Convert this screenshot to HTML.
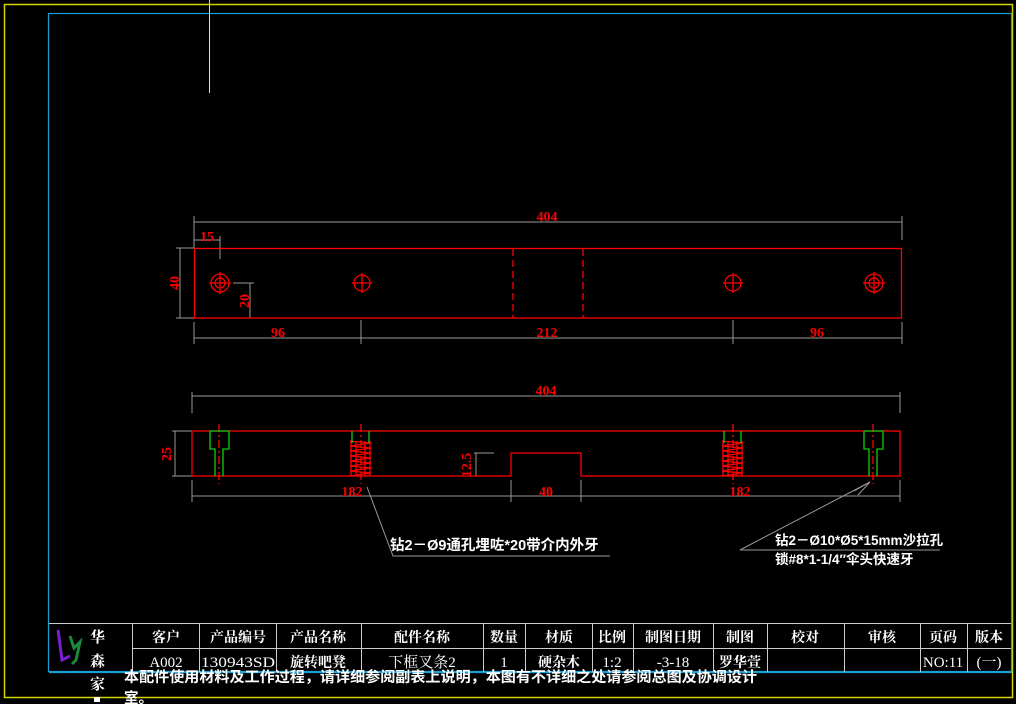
<!DOCTYPE html>
<html><head><meta charset="utf-8"><style>
html,body{margin:0;padding:0;background:#000;width:1016px;height:704px;overflow:hidden}
svg{display:block}
text{font-family:"Liberation Serif","Noto Serif CJK SC",serif}
.w{fill:#fff;font-family:"Liberation Sans","Noto Sans CJK SC",sans-serif;font-size:13px;font-weight:bold}
.r{fill:#f00;font-size:14px;font-weight:bold}
</style></head><body>
<svg width="1016" height="704" viewBox="0 0 1016 704" xmlns="http://www.w3.org/2000/svg">
<rect x="0" y="0" width="1016" height="704" fill="#000"/>
<rect x="4.5" y="4.5" width="1008" height="693" fill="none" stroke="#d4d400" stroke-width="1.5"/>
<rect x="48.5" y="13.5" width="963" height="658" fill="none" stroke="#1aa0d8" stroke-width="1.2"/>
<line x1="209.5" y1="0" x2="209.5" y2="93" stroke="#ddd" stroke-width="1"/>

<g stroke="#999" stroke-width="1" fill="none">
<line x1="194" y1="222" x2="902" y2="222"/>
<line x1="194" y1="216" x2="194" y2="248"/>
<line x1="902" y1="216" x2="902" y2="240"/>
<line x1="194" y1="240" x2="220" y2="240"/>
<line x1="220" y1="236" x2="220" y2="259"/>
<line x1="176" y1="248" x2="194" y2="248"/>
<line x1="176" y1="318" x2="194" y2="318"/>
<line x1="180" y1="248" x2="180" y2="318"/>
<line x1="233" y1="283" x2="254" y2="283"/>
<line x1="250" y1="283" x2="250" y2="318"/>
<line x1="233" y1="318" x2="254" y2="318"/>
<line x1="194" y1="322" x2="194" y2="344"/>
<line x1="361" y1="320" x2="361" y2="344"/>
<line x1="733" y1="320" x2="733" y2="344"/>
<line x1="902" y1="322" x2="902" y2="344"/>
<line x1="194" y1="338" x2="902" y2="338"/>
</g>
<g stroke="#f00" stroke-width="1.3" fill="none">
<rect x="194.5" y="248.5" width="707" height="69.5"/>
<line x1="513" y1="249" x2="513" y2="318" stroke-dasharray="7,4"/>
<line x1="583" y1="249" x2="583" y2="318" stroke-dasharray="7,4"/>
<circle cx="220" cy="283" r="9"/><circle cx="220" cy="283" r="5"/>
<line x1="209" y1="283" x2="231" y2="283"/><line x1="220" y1="272" x2="220" y2="294"/>
<circle cx="362" cy="283" r="8"/><line x1="352" y1="283" x2="372" y2="283"/><line x1="362" y1="273" x2="362" y2="293"/>
<circle cx="733" cy="283" r="8"/><line x1="723" y1="283" x2="743" y2="283"/><line x1="733" y1="273" x2="733" y2="293"/>
<circle cx="874" cy="283" r="9"/><circle cx="874" cy="283" r="5"/>
<line x1="863" y1="283" x2="885" y2="283"/><line x1="874" y1="272" x2="874" y2="294"/>
</g>
<text class="r" x="547" y="221" text-anchor="middle">404</text>
<text class="r" x="207" y="241" text-anchor="middle">15</text>
<text class="r" x="179" y="283" text-anchor="middle" transform="rotate(-90 179 283)">40</text>
<text class="r" x="249" y="301" text-anchor="middle" transform="rotate(-90 249 301)">20</text>
<text class="r" x="278" y="337" text-anchor="middle">96</text>
<text class="r" x="547" y="337" text-anchor="middle">212</text>
<text class="r" x="817" y="337" text-anchor="middle">96</text>

<g stroke="#999" stroke-width="1" fill="none">
<line x1="192" y1="396" x2="900" y2="396"/>
<line x1="192" y1="392" x2="192" y2="413"/>
<line x1="900" y1="392" x2="900" y2="413"/>
<line x1="172" y1="431" x2="192" y2="431"/>
<line x1="172" y1="476" x2="192" y2="476"/>
<line x1="175" y1="431" x2="175" y2="476"/>
<line x1="474" y1="453" x2="494" y2="453"/>
<line x1="476" y1="453" x2="476" y2="476"/>
<line x1="474" y1="476" x2="494" y2="476"/>
<line x1="192" y1="480" x2="192" y2="502"/>
<line x1="900" y1="480" x2="900" y2="502"/>
<line x1="511" y1="480" x2="511" y2="502"/>
<line x1="581" y1="480" x2="581" y2="502"/>
<line x1="192" y1="496" x2="900" y2="496"/>
<polyline points="367,487 393,556 610,556"/>
<polyline points="870,482 740,550 940,550"/>
<polyline points="854,491 870,482 858,495"/>
</g>
<g stroke="#f00" stroke-width="1.3" fill="none">
<polyline points="192,431 900,431 900,476 581,476 581,453 511,453 511,476 192,476 192,431"/>
<line x1="219" y1="424" x2="219" y2="484" stroke-dasharray="8,3,2,3"/>
<line x1="361" y1="424" x2="361" y2="484" stroke-dasharray="8,3,2,3"/>
<line x1="733" y1="424" x2="733" y2="484" stroke-dasharray="8,3,2,3"/>
<line x1="873" y1="424" x2="873" y2="484" stroke-dasharray="8,3,2,3"/>
<path d="M350 441 L371 443 L350 446 L371 448 L350 451 L371 453 L350 456 L371 458 L350 461 L371 463 L350 466 L371 468 L350 471 L371 473 L350 476 M351 441 V476 M370 441 V476 M356 441 V476 M365 441 V476"/>
<path d="M722 441 L743 443 L722 446 L743 448 L722 451 L743 453 L722 456 L743 458 L722 461 L743 463 L722 466 L743 468 L722 471 L743 473 L722 476 M723 441 V476 M742 441 V476 M728 441 V476 M737 441 V476"/>
</g>
<g stroke="#1c1" stroke-width="1.3" fill="none">
<path d="M210 431 H229 V449 H223 V476 M210 431 V449 H215 V476"/>
<path d="M864 431 H883 V449 H877 V476 M864 431 V449 H869 V476"/>
<line x1="352" y1="431" x2="352" y2="443"/><line x1="369" y1="431" x2="369" y2="443"/>
<line x1="724" y1="431" x2="724" y2="443"/><line x1="741" y1="431" x2="741" y2="443"/>
</g>
<text class="r" x="546" y="395" text-anchor="middle">404</text>
<text class="r" x="171" y="454" text-anchor="middle" transform="rotate(-90 171 454)">25</text>
<text class="r" x="471" y="465" text-anchor="middle" transform="rotate(-90 471 465)">12.5</text>
<text class="r" x="352" y="496" text-anchor="middle">182</text>
<text class="r" x="546" y="496" text-anchor="middle">40</text>
<text class="r" x="740" y="496" text-anchor="middle">182</text>
<text class="w" x="390" y="550" style="font-size:14.5px">钻2－Ø9通孔埋咗*20带介内外牙</text>
<text class="w" x="775" y="545" style="font-size:13.5px">钻2－Ø10*Ø5*15mm沙拉孔</text>
<text class="w" x="775" y="564" style="font-size:13.5px">锁#8*1-1/4″伞头快速牙</text>

<g stroke="#ccc" stroke-width="1" fill="none">
<line x1="49" y1="623.5" x2="1011" y2="623.5"/>
<line x1="132" y1="648.5" x2="1011" y2="648.5"/>
<line x1="132.5" y1="623" x2="132.5" y2="672"/>
<line x1="199.5" y1="623" x2="199.5" y2="672"/>
<line x1="276.5" y1="623" x2="276.5" y2="672"/>
<line x1="361.5" y1="623" x2="361.5" y2="672"/>
<line x1="483.5" y1="623" x2="483.5" y2="672"/>
<line x1="525.5" y1="623" x2="525.5" y2="672"/>
<line x1="592.5" y1="623" x2="592.5" y2="672"/>
<line x1="633.5" y1="623" x2="633.5" y2="672"/>
<line x1="713.5" y1="623" x2="713.5" y2="672"/>
<line x1="767.5" y1="623" x2="767.5" y2="672"/>
<line x1="844.5" y1="623" x2="844.5" y2="672"/>
<line x1="920.5" y1="623" x2="920.5" y2="672"/>
<line x1="967.5" y1="623" x2="967.5" y2="672"/>
</g>
<line x1="49" y1="672.5" x2="1012" y2="672.5" stroke="#1aa0d8" stroke-width="1.2"/>
<path d="M58 630 L62 660 L70 656" stroke="#7a1fd0" stroke-width="3" fill="none"/>
<path d="M70 636 L74 648 L80 642 L76 660 L72 664" stroke="#1a8a3a" stroke-width="3" fill="none"/>
<g class="w" style="font-size:15px">
<text x="90" y="642">华</text><text x="90" y="666">森</text><text x="90" y="689">家</text>
</g>
<rect x="94" y="697" width="6" height="5" fill="#fff"/>
<g class="w" text-anchor="middle" style="font-size:14px">
<text x="166" y="642">客户</text>
<text x="238" y="642">产品编号</text>
<text x="318" y="642">产品名称</text>
<text x="422" y="642">配件名称</text>
<text x="504" y="642">数量</text>
<text x="559" y="642">材质</text>
<text x="612" y="642">比例</text>
<text x="673" y="642">制图日期</text>
<text x="740" y="642">制图</text>
<text x="805" y="642">校对</text>
<text x="882" y="642">审核</text>
<text x="943" y="642">页码</text>
<text x="989" y="642">版本</text>
</g>
<g class="w" text-anchor="middle" style="font-weight:normal;font-size:15px">
<text x="166" y="667">A002</text>
<text x="238" y="667" textLength="74" lengthAdjust="spacingAndGlyphs">130943SD</text>
<text x="318" y="667" style="font-weight:bold;font-size:14px">旋转吧凳</text>
<text x="422" y="667">下框叉条2</text>
<text x="504" y="667">1</text>
<text x="559" y="667" style="font-weight:bold;font-size:14px">硬杂木</text>
<text x="612" y="667">1:2</text>
<text x="673" y="667">-3-18</text>
<text x="740" y="667" style="font-weight:bold;font-size:14px">罗华萱</text>
<text x="943" y="667">NO:11</text>
<text x="989" y="667">(一)</text>
</g>
<text class="w" x="124" y="682" style="font-size:14.5px" textLength="633" lengthAdjust="spacingAndGlyphs">本配件使用材料及工作过程，请详细参阅副表上说明，本图有不详细之处请参阅总图及协调设计</text>
<text class="w" x="124" y="703" style="font-size:14.5px">室。</text>
</svg>
</body></html>
